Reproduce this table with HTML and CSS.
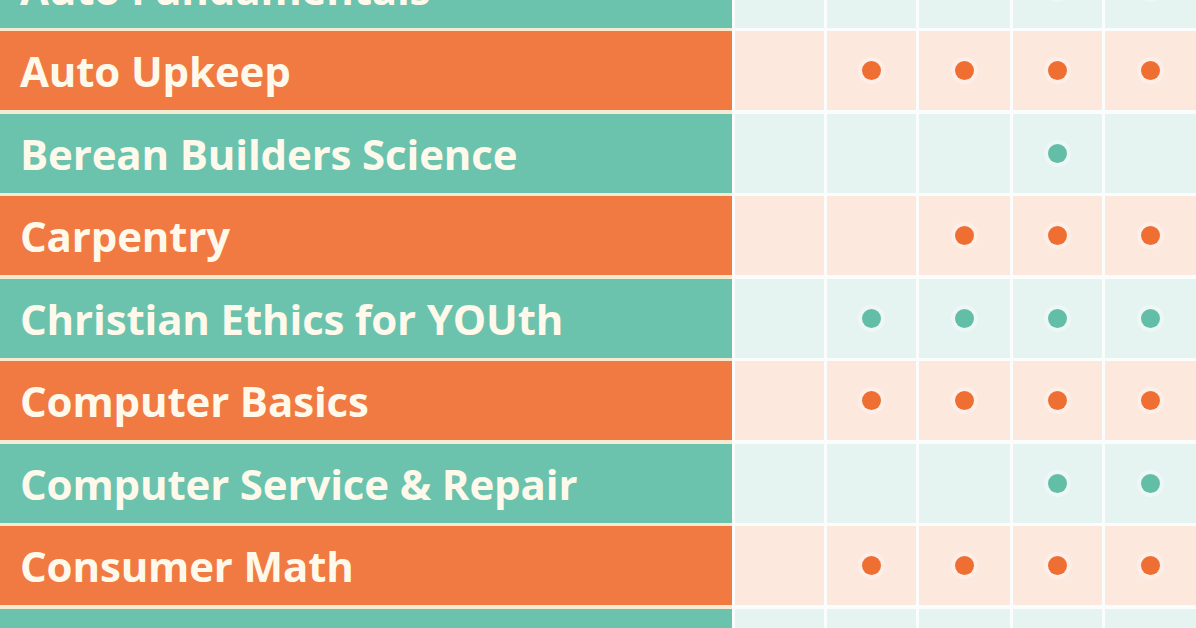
FILE: index.html
```html
<!DOCTYPE html>
<html lang="en">
<head>
<meta charset="utf-8">
<title>Course Chart</title>
<link rel="stylesheet" href="styles.css">
</head>
<body>
<div class="chart">
  <div class="row teal">
    <div class="label">Auto Fundamentals</div>
    <div class="cell"></div><div class="cell"></div><div class="cell"></div><div class="cell"><span class="dot"></span></div><div class="cell"><span class="dot"></span></div>
  </div>
  <div class="row orange">
    <div class="label">Auto Upkeep</div>
    <div class="cell"></div><div class="cell"><span class="dot"></span></div><div class="cell"><span class="dot"></span></div><div class="cell"><span class="dot"></span></div><div class="cell"><span class="dot"></span></div>
  </div>
  <div class="row teal">
    <div class="label">Berean Builders Science</div>
    <div class="cell"></div><div class="cell"></div><div class="cell"></div><div class="cell"><span class="dot"></span></div><div class="cell"></div>
  </div>
  <div class="row orange">
    <div class="label">Carpentry</div>
    <div class="cell"></div><div class="cell"></div><div class="cell"><span class="dot"></span></div><div class="cell"><span class="dot"></span></div><div class="cell"><span class="dot"></span></div>
  </div>
  <div class="row teal">
    <div class="label">Christian Ethics for YOUth</div>
    <div class="cell"></div><div class="cell"><span class="dot"></span></div><div class="cell"><span class="dot"></span></div><div class="cell"><span class="dot"></span></div><div class="cell"><span class="dot"></span></div>
  </div>
  <div class="row orange">
    <div class="label">Computer Basics</div>
    <div class="cell"></div><div class="cell"><span class="dot"></span></div><div class="cell"><span class="dot"></span></div><div class="cell"><span class="dot"></span></div><div class="cell"><span class="dot"></span></div>
  </div>
  <div class="row teal">
    <div class="label">Computer Service &amp; Repair</div>
    <div class="cell"></div><div class="cell"></div><div class="cell"></div><div class="cell"><span class="dot"></span></div><div class="cell"><span class="dot"></span></div>
  </div>
  <div class="row orange">
    <div class="label">Consumer Math</div>
    <div class="cell"></div><div class="cell"><span class="dot"></span></div><div class="cell"><span class="dot"></span></div><div class="cell"><span class="dot"></span></div><div class="cell"><span class="dot"></span></div>
  </div>
  <div class="row teal">
    <div class="label"></div>
    <div class="cell"></div><div class="cell"></div><div class="cell"></div><div class="cell"></div><div class="cell"></div>
  </div>
</div>
</body>
</html>
```

FILE: styles.css
```css
html, body {
  margin: 0;
  padding: 0;
  background: #fbfdfc;
  overflow: hidden;
}

.chart {
  display: flex;
  flex-direction: column;
  gap: 3.5px;
  margin-top: -51.5px;
  width: 1196px;
  background: linear-gradient(to right, #f6ead3 0, #f6ead3 732px, #fbfdfc 732px);
}

.row {
  display: grid;
  grid-template-columns: 732px 89px 89px 91px 89px 91px;
  column-gap: 3px;
  height: 79px;
  background: #fbfdfc;
}

.label {
  box-sizing: border-box;
  height: 79px;
  padding: 1px 0 0 20px;
  line-height: 78px;
  font-family: "Open Sans", "Liberation Sans", sans-serif;
  font-weight: 700;
  font-size: 42px;
  color: #fff9ec;
  white-space: nowrap;
  overflow: hidden;
  letter-spacing: -0.15px;
}

.cell {
  display: flex;
  align-items: center;
  justify-content: center;
}

.dot {
  width: 19px;
  height: 19px;
  border-radius: 50%;
  box-shadow: 0 0 0 4px rgba(255, 255, 255, 0.3);
}

.teal .label { background: #6bc3ad; }
.teal .cell { background: #e6f4f1; }
.teal .dot { background: #62bea6; }

.orange .label { background: #f17a42; }
.orange .cell { background: #fde8de; }
.orange .dot { background: #ef6e32; }
```
